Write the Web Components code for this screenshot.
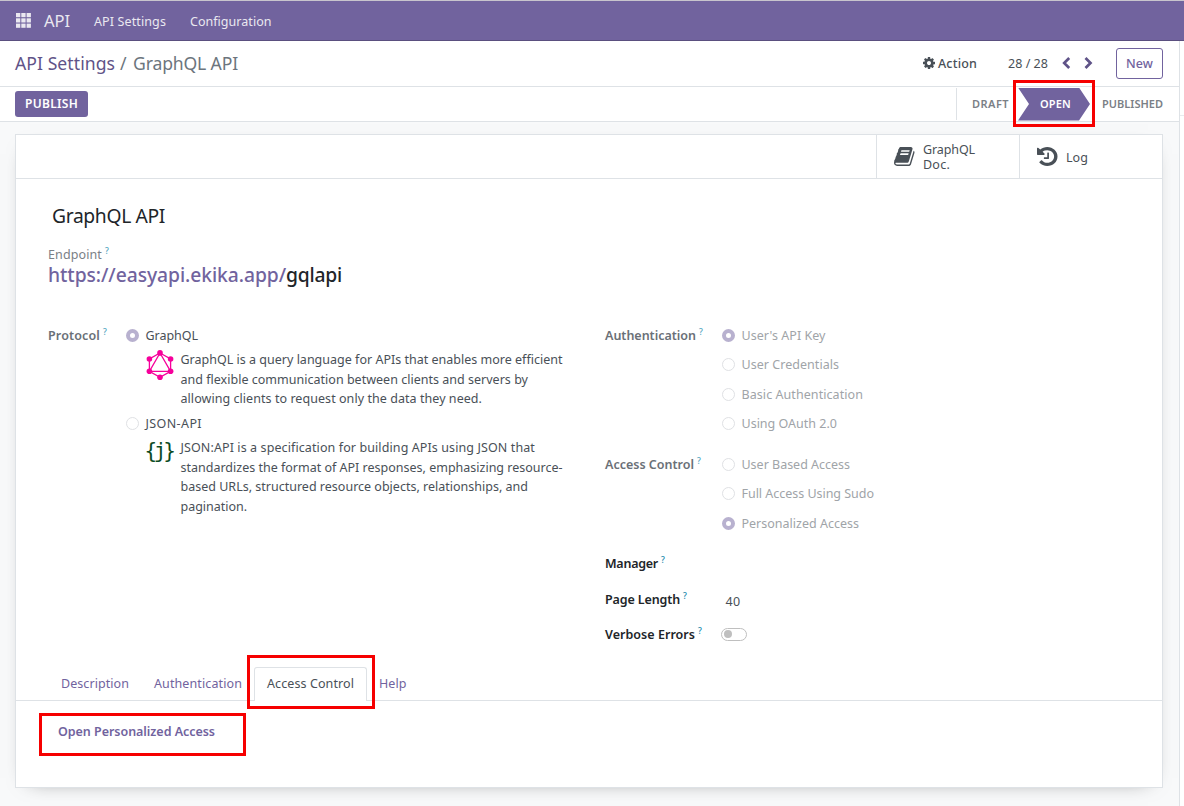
<!DOCTYPE html>
<html lang="en">
<head>
<meta charset="utf-8">
<title>GraphQL API</title>
<style>
html,body{margin:0;height:100%;overflow:hidden;background:#fff}
body{font:12.5px/20px "Noto Sans","Open Sans",sans-serif;color:#495057}
</style>
</head>
<body>
<api-page></api-page>
<script>
function define(name, css, html, after) {
  const tpl = document.createElement('template');
  tpl.innerHTML = '<style>:host{display:block;box-sizing:border-box}*{box-sizing:border-box}' + css + '</style>' + html;
  customElements.define(name, class extends HTMLElement {
    connectedCallback() {
      if (this.shadowRoot) return;
      this.attachShadow({ mode: 'open' }).append(document.importNode(tpl.content, true));
      if (after) after(this, this.shadowRoot);
    }
  });
}

/* A single line of text whose tracking is set so that it fills the width w. */
define('fit-text', ':host{display:inline-block;white-space:pre;flex:none}', '<span><slot></slot></span>', (el, root) => {
  const w = +el.getAttribute('w');
  const span = root.querySelector('span');
  const n = el.textContent.length;
  const natural = span.getBoundingClientRect().width;
  el.style.width = w + 'px';
  if (natural) span.style.letterSpacing = ((w - natural) / n).toFixed(3) + 'px';
});

const ICONS = {
  cog: ['0 -128 1536 1536', '<path d="M1024 640q0-106-75-181t-181-75-181 75-75 181 75 181 181 75 181-75 75-181zm512-109v222q0 12-8 23t-20 13l-185 28q-19 54-39 91 35 50 107 138 10 12 10 25t-9 23q-27 37-99 108t-94 71q-12 0-26-9l-138-108q-44 23-91 38-16 136-29 186-7 28-36 28h-222q-14 0-24.5-8.5t-11.5-21.5l-28-184q-49-16-90-37l-141 107q-10 9-25 9-14 0-25-11-126-114-165-168-7-10-7-23 0-12 8-23 15-21 51-66.5t54-70.5q-27-50-41-99l-183-27q-13-2-21-12.5t-8-23.5v-222q0-12 8-23t19-13l186-28q14-46 39-92-40-57-107-138-10-12-10-24 0-10 9-23 26-36 98.5-107.5t94.5-71.5q13 0 26 10l138 107q44-23 91-38 16-136 29-186 7-28 36-28h222q14 0 24.5 8.5t11.5 21.5l28 184q49 16 90 37l142-107q9-9 24-9 13 0 25 10 129 119 165 170 7 8 7 22 0 12-8 23-15 21-51 66.5t-54 70.5q26 50 41 98l183 28q13 2 21 12.5t8 23.5z"/>'],
  history: ['0 -128 1536 1536', '<path d="M1536 640q0 156-61 298t-164 245-245 164-298 61q-172 0-327-72.5T177 1131q-7-10-6.5-22.5t8.5-20.5l137-138q10-9 25-9 16 2 23 12 73 95 179 147t225 52q104 0 198.5-40.5T1130 1002t109.5-163.5T1280 640t-40.5-198.5T1130 278 966.5 168.5 768 128q-98 0-188 35.5T420 265l137 138q31 30 14 69-17 40-59 40H64q-26 0-45-19T0 448V0q0-42 40-59 39-17 69 14l130 129q107-101 244.5-156.5T768-128q156 0 298 61t245 164 164 245 61 298zM896 352v448q0 14-9 23t-23 9H544q-14 0-23-9t-9-23v-64q0-14 9-23t23-9h224V352q0-14 9-23t23-9h64q14 0 23 9t9 23z"/>'],
  book: ['0 128 1664 1536', '<path d="M1639 478q40 57 18 129l-275 906q-19 64-76.5 107.5t-122.5 43.5h-923q-77 0-148.5-53.5t-99.5-131.5q-24-67-2-127 0-4 3-27t4-37q1-8-3-21.5t-3-19.5q2-11 8-21t16.5-23.5 16.5-23.5q23-38 45-91.5t30-91.5q3-10 .5-30t-.5-28q3-11 17-28t17-23q21-36 42-92t25-90q1-9-2.5-32t.5-28q4-13 22-30.5t22-22.5q19-26 42.5-84.5t27.5-96.5q1-8-3-25.5t-2-26.5q2-8 9-18t18-23 17-21q8-12 16.5-30.5t15-35 16-36 19.5-32 26.5-23.5 36-11.5 47.5 5.5l-1 3q38-9 51-9h761q74 0 114 56t18 130l-274 906q-36 119-71.5 153.5t-128.5 34.5h-869q-27 0-38 15-11 16-1 43 24 70 144 70h923q29 0 56-15.5t35-41.5l300-987q7-22 5-57 38 15 59 43zm-1064 2q-4 13 2 22.5t20 9.5h608q13 0 25.5-9.5t16.5-22.5l21-64q4-13-2-22.5t-20-9.5h-608q-13 0-25.5 9.5t-16.5 22.5zm-83 256q-4 13 2 22.5t20 9.5h608q13 0 25.5-9.5t16.5-22.5l21-64q4-13-2-22.5t-20-9.5h-608q-13 0-25.5 9.5t-16.5 22.5z"/>'],
  left: ['0 0 9 12', '<path d="M7.2 1 2.2 6l5 5" fill="none" stroke="currentColor" stroke-width="2.7"/>'],
  right: ['0 0 9 12', '<path d="M1.5 1l5 5-5 5" fill="none" stroke="currentColor" stroke-width="2.7"/>'],
  apps: ['0 0 15 15', [0, 5.3, 10.6].map(y => [0, 5.3, 10.6].map(x => `<rect x="${x}" y="${y}" width="4.3" height="4.2"/>`).join('')).join('')],
  graphql: ['0 0 28 30', '<g fill="none" stroke="currentColor" stroke-width="1.3"><path d="M14 3 24.6 9v12.3L14 27.3 3.4 21.3V9z"/><path d="M14 3 3.4 21.3h21.2z"/></g><circle cx="14" cy="2.9" r="2.8"/><circle cx="24.6" cy="9" r="2.8"/><circle cx="24.6" cy="21.2" r="2.8"/><circle cx="14" cy="27.2" r="2.8"/><circle cx="3.4" cy="21.2" r="2.8"/><circle cx="3.4" cy="9" r="2.8"/>'],
};
define('ui-icon', ':host{flex:none}span{display:contents}svg{display:block;width:100%;height:100%;fill:currentColor}', '<span></span>', (el, root) => {
  const [box, body] = ICONS[el.getAttribute('name')];
  root.querySelector('span').innerHTML = `<svg viewBox="${box}" preserveAspectRatio="none">${body}</svg>`;
});

define('top-nav', `
:host{display:flex;align-items:center;height:41px;background:#71639e;border-top:1px solid #c8c5cd;border-bottom:1px solid #5a4f7f;padding-left:16px;color:#eae8f0}
ui-icon{width:15px;height:15px;margin:0 13px 1px 0}
.brand{font-size:16.5px;margin-right:24px}.m{margin-right:24px}.m,.n{margin-top:2px}`, `
<ui-icon name="apps"></ui-icon><fit-text class="brand" w="26">API</fit-text>
<fit-text class="m" w="72">API Settings</fit-text><fit-text class="n" w="81.5">Configuration</fit-text>`);

define('control-panel', `
:host{display:flex;align-items:center;height:46px;padding:0 16px 0 15px;border-bottom:1px solid #dee2e6;background:#fff}
.crumb{font-size:17.6px;color:#5f5388;margin-bottom:2px}.sep,.cur{color:#6c757d}.sep{margin:0 5px 2px 5px}
.gap{flex:1}.act{font-weight:550;margin:0 31px 0 3px}.cog{width:12px;height:12px;margin-bottom:1px}
.l{width:9px;height:12px;margin:0 13px 1px 14px;color:#5f5388}.r{width:9px;height:12px;color:#5f5388;margin:0 23px 1px 0}
button{font:inherit;font-weight:550;color:#71639e;background:#fff;border:1px solid #71639e;border-radius:3px;width:47px;height:31px;padding:0;display:flex;align-items:center;justify-content:center}`, `
<fit-text class="crumb" w="100">API Settings</fit-text><fit-text class="crumb sep" w="8">/</fit-text><fit-text class="crumb cur" w="105">GraphQL API</fit-text>
<span class="gap"></span><ui-icon class="cog" name="cog"></ui-icon><fit-text class="act" w="39">Action</fit-text>
<fit-text w="40">28 / 28</fit-text><ui-icon class="l" name="left"></ui-icon><ui-icon class="r" name="right"></ui-icon>
<button><fit-text w="27">New</fit-text></button>`);

define('status-bar', `
:host{display:flex;align-items:center;height:35px;padding:0 16px 0 15px;border-bottom:1px solid #dee2e6;background:#fff}
button{font:inherit;font-size:12px;font-weight:600;color:#fff;background:#71639e;border:0;border-radius:3px;width:73px;height:26px;padding:0;display:flex;align-items:center;justify-content:center}
.gap{flex:1}.steps{display:flex;align-items:center;height:32px;border-left:1px solid #dee2e6;padding-left:15px;font-size:11px;font-weight:600;color:#7b8086}
.on{display:flex;align-items:center;width:72px;height:33px;margin:0 12px 0 9px;padding-left:22px;color:#fff;background:#71639e;font-weight:600;clip-path:polygon(0 0,61px 0,100% 50%,61px 100%,0 100%,11px 50%)}`, `
<button><fit-text w="53">PUBLISH</fit-text></button><span class="gap"></span>
<div class="steps"><fit-text w="37">DRAFT</fit-text><div class="on"><fit-text w="31">OPEN</fit-text></div><fit-text w="61">PUBLISHED</fit-text></div>`);

define('stat-button', `:host{display:flex;align-items:center;width:143px;border-left:1px solid #dee2e6;padding-left:17px;line-height:15px}
ui-icon{width:20.5px;height:19px;margin:0 8.5px 1px 0}.t{display:flex;flex-direction:column}`, '<span class="i"></span><div class="t"><slot></slot></div>', (el, root) => {
  const i = root.querySelector('.i'), n = document.createElement('ui-icon');
  n.setAttribute('name', el.getAttribute('icon'));
  i.replaceWith(n);
});

define('field-label', `:host{display:flex;font-weight:600;height:20px;color:var(--label,#6a7077)}
sup{font-size:8.5px;line-height:12px;color:var(--tip,#4fa5c0);margin-left:3px;font-weight:500}`, '<slot></slot><sup>?</sup>');

define('radio-option', `:host{display:flex;align-items:center;height:20px}
i{width:13px;height:13px;border-radius:50%;border:1px solid #dfe1e4;background:#fff;margin:0 6.5px 1px 0;flex:none}
:host([checked]) i{border:4px solid #b8b1cf}`, '<i></i><slot></slot>');

define('protocol-note', `:host{display:flex;padding-left:20px}
.pic{width:28px;margin-right:6.5px;flex:none}.body{display:flex;flex-direction:column;line-height:19.5px}`,
  '<div class="pic"><slot name="pic"></slot></div><div class="body"><slot></slot></div>');

define('toggle-switch', `:host{width:26px;height:13px;border:1px solid #bfbfbf;border-radius:7px;padding:1.5px 2px}
i{display:block;width:8px;height:8px;border-radius:50%;background:#bfbfbf}`, '<i></i>');

define('tab-item', `:host{display:flex;align-items:center;height:34px;padding:0 12px 2px;color:#71639e;border:1px solid transparent;border-bottom:0}
:host([active]){color:#495057;background:#fff;border-color:#dee2e6;border-radius:3px 3px 0 0}`, '<slot></slot>');

define('mark-box', ':host{position:absolute;border:3px solid #f60000;pointer-events:none}', '', el => {
  const [x, y, w, h] = el.getAttribute('box').split(' ');
  Object.assign(el.style, { left: x + 'px', top: y + 'px', width: w + 'px', height: h + 'px' });
});

define('form-sheet', `
:host{width:1148px;height:654px;background:#fff;border:1px solid #dee2e6;box-shadow:0 5px 20px -15px rgba(0,0,0,.65)}
.box{display:flex;justify-content:flex-end;height:44px;border-bottom:1px solid #dee2e6}
.log{margin-top:1px}
.title{padding:27px 0 0 36px;font-size:19.3px;line-height:20px;color:#212529}
.end{padding:19px 0 0 32px;--label:#7a8086}.end field-label{font-weight:400}
.url{padding-left:32px;margin-top:-1px;font-size:19.3px;line-height:22px;font-weight:500;color:#212529;display:flex}.url .a{color:#71639e}
.cols{display:grid;grid-template-columns:557px 1fr;padding:40px 0 0 32px;height:381px}
.l{display:grid;grid-template-columns:78px 1fr;align-items:start}
.r{display:grid;grid-template-columns:117px 1fr;align-content:start;align-items:start}
.opts{display:flex;flex-direction:column;gap:9.4px;color:#a0a4a8}
.ac{margin-top:21px}.opts.ac{margin-top:20.8px}.dark{--label:#212529;--tip:#1587ab}
.man{margin-top:20px;grid-column:1/3}.pl{margin-top:16px}.v40{margin:18px 0 0 3.5px;line-height:20px}.ve{margin-top:13px}.sw{margin:16px 0 0 -1px}
protocol-note{padding-top:4px}.g{width:28px;height:30px;color:#f6009b}.js{margin-top:5px}.js+protocol-note{padding-top:4.6px}
.j{color:#0c4b24;font:21px/26px "DejaVu Sans Mono",monospace;margin:0 0 0 -1.5px}
.tabs{display:flex;align-items:flex-end;height:34px;padding-left:32px;border-bottom:1px solid #dee2e6}
.tabs tab-item{margin-bottom:-1px}.tabs tab-item+tab-item{margin-left:-1px}
.open{display:block;font-weight:600;color:#71639e;padding:21px 0 0 42px}`, `
<div class="box"><stat-button icon="book"><fit-text w="52">GraphQL</fit-text><fit-text w="27">Doc.</fit-text></stat-button>
<stat-button icon="history"><fit-text class="log" w="22">Log</fit-text></stat-button></div>
<div class="title"><fit-text w="113">GraphQL API</fit-text></div>
<div class="end"><field-label><fit-text w="54">Endpoint</fit-text></field-label></div>
<div class="url"><fit-text class="a" w="238">https://easyapi.ekika.app/</fit-text><fit-text w="56">gqlapi</fit-text></div>
<div class="cols">
<div class="l"><field-label><fit-text w="52">Protocol</fit-text></field-label><div>
<radio-option checked><fit-text w="52.5">GraphQL</fit-text></radio-option>
<protocol-note><ui-icon class="g" slot="pic" name="graphql"></ui-icon><fit-text w="382">GraphQL is a query language for APIs that enables more efficient</fit-text><fit-text w="347.5">and flexible communication between clients and servers by</fit-text><fit-text w="301.5">allowing clients to request only the data they need.</fit-text></protocol-note>
<radio-option class="js"><fit-text w="56.5">JSON-API</fit-text></radio-option>
<protocol-note><fit-text class="j" slot="pic" w="28">{j}</fit-text><fit-text w="354.5">JSON:API is a specification for building APIs using JSON that</fit-text><fit-text w="382">standardizes the format of API responses, emphasizing resource-</fit-text><fit-text w="347.5">based URLs, structured resource objects, relationships, and</fit-text><fit-text w="66.5">pagination.</fit-text></protocol-note>
</div></div>
<div class="r">
<field-label><fit-text w="91">Authentication</fit-text></field-label>
<div class="opts"><radio-option checked><fit-text w="84">User's API Key</fit-text></radio-option><radio-option><fit-text w="97.5">User Credentials</fit-text></radio-option><radio-option><fit-text w="121.5">Basic Authentication</fit-text></radio-option><radio-option><fit-text w="95.5">Using OAuth 2.0</fit-text></radio-option></div>
<field-label class="ac"><fit-text w="89">Access Control</fit-text></field-label>
<div class="opts ac"><radio-option><fit-text w="108.5">User Based Access</fit-text></radio-option><radio-option><fit-text w="132.5">Full Access Using Sudo</fit-text></radio-option><radio-option checked><fit-text w="117.5">Personalized Access</fit-text></radio-option></div>
<field-label class="dark man"><fit-text w="53">Manager</fit-text></field-label>
<field-label class="dark pl"><fit-text w="75">Page Length</fit-text></field-label><fit-text class="v40" w="15">40</fit-text>
<field-label class="dark ve"><fit-text w="90">Verbose Errors</fit-text></field-label><toggle-switch class="sw"></toggle-switch>
</div></div>
<div class="tabs"><tab-item><fit-text w="68">Description</fit-text></tab-item><tab-item><fit-text w="88">Authentication</fit-text></tab-item><tab-item active><fit-text w="87">Access Control</fit-text></tab-item><tab-item><fit-text w="27.5">Help</fit-text></tab-item></div>
<div class="open"><fit-text w="157">Open Personalized Access</fit-text></div>`);

define('api-page', `
:host{position:relative;width:1184px;height:806px;overflow:hidden;display:flex;flex-direction:column}
.main{display:flex;flex:1}.left{width:1180px;border-right:1px solid #dee2e6;display:flex;flex-direction:column}
.bg{flex:1;background:#f8f9fa;padding:12px 0 0 15px}.side{flex:1;height:75px;border-bottom:1px solid #e9ebee}`, `
<top-nav></top-nav>
<div class="main"><div class="left"><control-panel></control-panel><status-bar></status-bar><div class="bg"><form-sheet></form-sheet></div></div><div class="side"></div></div>
<mark-box box="1013 80 82 47"></mark-box><mark-box box="247 655 128 54"></mark-box><mark-box box="39 713 207 43"></mark-box>`);
</script>
</body>
</html>
